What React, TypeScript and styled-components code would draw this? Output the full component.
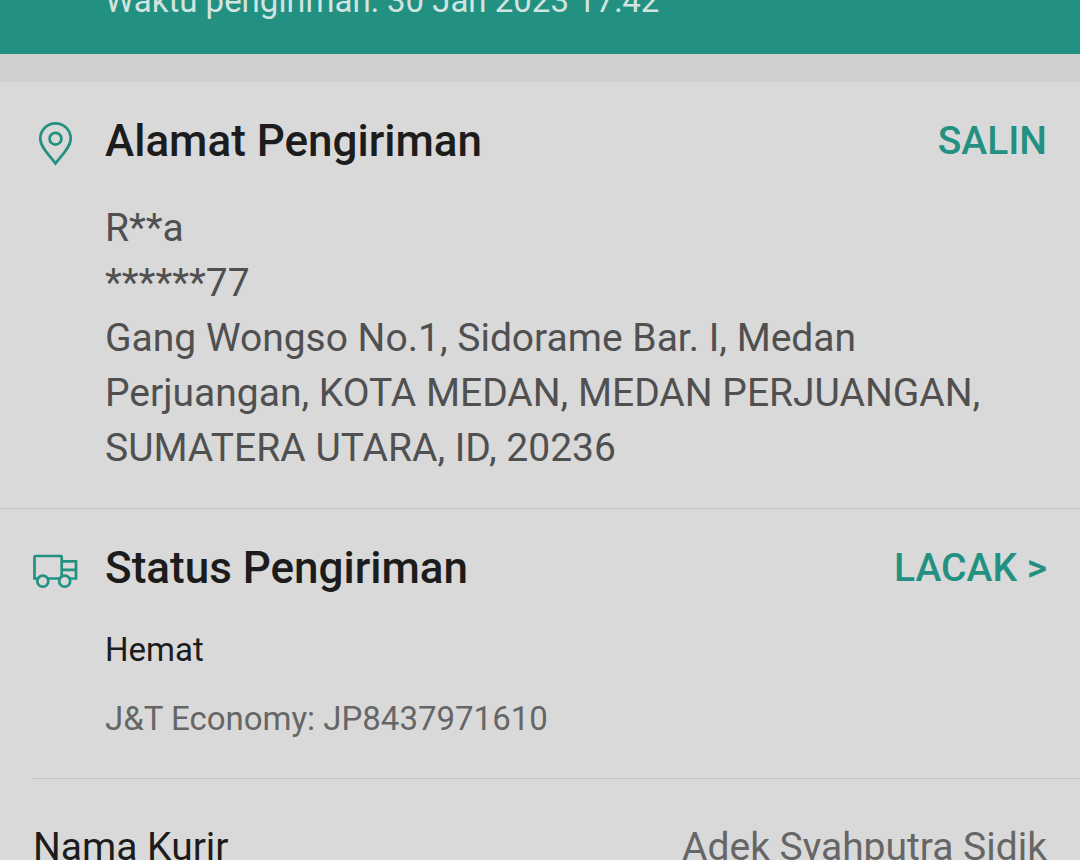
import React from "react";
import styled, { createGlobalStyle } from "styled-components";

const Global = createGlobalStyle`
  * { box-sizing: border-box; }
  html, body, #root { height: 100%; }
  body { margin: 0; background: #d9d9d9; font-family: Roboto, "Liberation Sans", sans-serif; color: #1c1c1c; overflow: hidden; }
  h2, p, dl, dt, dd, address { margin: 0; font-style: normal; }
`;

const Screen = styled.main`
  height: 100vh;
  overflow: hidden;
`;

const Banner = styled.header`
  display: flex;
  align-items: flex-end;
  height: 54px;
  padding: 0 33px 33px 105px;
  background: #229182;
  color: #d3e3e0;
  font-size: 33px;
  line-height: 40px;
`;

const Gap = styled.div`
  height: 28px;
  background: #d0d0d0;
`;

const Section = styled.section<{ $divided?: boolean }>`
  padding: 31px 33px 32px 33px;
  border-bottom: ${(p) => (p.$divided ? "1px solid #c3c3c3" : "0")};
`;

const Heading = styled.div`
  display: grid;
  grid-template-columns: 45px 1fr auto;
  column-gap: 27px;
  align-items: center;
  height: 56px;
`;

const Icon = styled.svg`
  margin-top: 6px;
  fill: none;
  stroke: #229182;
  stroke-width: 2.7;
`;

const Title = styled.h2`
  font-size: 44px;
  font-weight: 500;
  line-height: 56px;
`;

const Action = styled.button`
  border: 0;
  padding: 0;
  background: none;
  color: #229182;
  font: 500 39px/52px Roboto, "Liberation Sans", sans-serif;
`;

const Address = styled.address`
  padding: 32px 0 0 72px;
  color: #505050;
  font-size: 39px;
  line-height: 55px;
`;

const Shipping = styled.div`
  display: flex;
  flex-direction: column;
  gap: 29px;
  padding: 34px 0 7px 72px;
  font-size: 33px;
  line-height: 40px;
`;

const Tracking = styled.p`
  color: #666666;
`;

const Courier = styled.dl`
  display: flex;
  justify-content: space-between;
  margin-left: 33px;
  padding: 42px 33px 0 0;
  border-top: 1px solid #c3c3c3;
  font-size: 39px;
  line-height: 52px;
`;

const CourierName = styled.dd`
  color: #666666;
`;

const PinIcon = () => (
  <Icon width="45" height="46" viewBox="0 0 45 46" aria-hidden="true">
    <path d="M22.500 42.500C17 35 7.300 26.500 7.300 17.500a15.200 15.200 0 0 1 30.400 0C37.700 26.500 28 35 22.500 42.500Z" />
    <circle cx="22.500" cy="17.700" r="5.900" />
  </Icon>
);

const TruckIcon = () => (
  <Icon width="45" height="36" viewBox="0 0 45 36" aria-hidden="true">
    <path d="M4.900 25.500H1.500V4Q1.500 3 2.500 3H27.700Q28.700 3 28.700 4V23M14.700 25.500H26.800M28.700 8.400H43V25.500H36.600M43 16.800H28.700" />
    <circle cx="9.800" cy="28.200" r="5.500" />
    <circle cx="31.700" cy="28.200" r="5.500" />
  </Icon>
);

export default function App() {
  return (
    <Screen>
      <Global />
      <Banner>Waktu pengiriman: 30 Jan 2023 17:42</Banner>
      <Gap />
      <Section $divided>
        <Heading>
          <PinIcon />
          <Title>Alamat Pengiriman</Title>
          <Action type="button">SALIN</Action>
        </Heading>
        <Address>
          R**a<br />
          ******77<br />
          Gang Wongso No.1, Sidorame Bar. I, Medan Perjuangan, KOTA MEDAN, MEDAN PERJUANGAN, SUMATERA UTARA, ID, 20236
        </Address>
      </Section>
      <Section>
        <Heading>
          <TruckIcon />
          <Title>Status Pengiriman</Title>
          <Action type="button">LACAK &gt;</Action>
        </Heading>
        <Shipping>
          <p>Hemat</p>
          <Tracking>J&amp;T Economy: JP8437971610</Tracking>
        </Shipping>
      </Section>
      <Courier>
        <dt>Nama Kurir</dt>
        <CourierName>Adek Syahputra Sidik</CourierName>
      </Courier>
    </Screen>
  );
}
